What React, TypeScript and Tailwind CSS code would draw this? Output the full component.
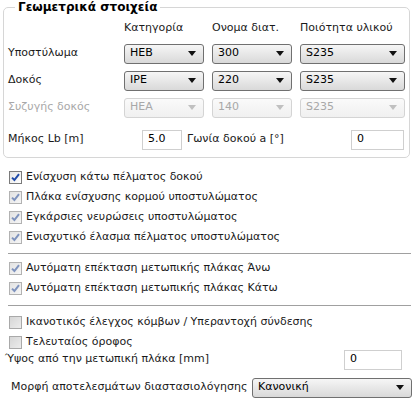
import React from "react";

const font = { fontFamily: '"DejaVu Sans", Verdana, sans-serif' };

function Select({ value, disabled, className = "" }: { value: string; disabled?: boolean; className?: string }) {
  return (
    <div
      className={`flex h-[20px] items-center justify-between rounded-[3px] border pl-[5px] pr-[7px] ${
        disabled
          ? "border-[#d4d4d4] bg-gradient-to-b from-[#fafafa] to-[#f0f0f0] text-[#a8a8a8]"
          : "border-[#707070] bg-gradient-to-b from-[#f6f6f6] to-[#d9d9d9] text-black"
      } ${className}`}
    >
      <span>{value}</span>
      <svg width="8" height="5" viewBox="0 0 8 5">
        <path d="M0 0h8L4 5z" fill={disabled ? "#c0c0c0" : "#111"} />
      </svg>
    </div>
  );
}

function TextBox({ value, className = "" }: { value: string; className?: string }) {
  return (
    <div className={`flex h-[20px] items-center border border-[#cfcfcf] bg-white pl-[5px] text-black ${className}`}>
      {value}
    </div>
  );
}

function Check({ state }: { state: "on" | "on-dis" | "off-dis" }) {
  if (state === "off-dis") {
    return <span className="h-[13px] w-[13px] shrink-0 border border-[#a9a9a9] bg-gradient-to-br from-[#d6d6d6] to-[#ececec]" />;
  }
  const on = state === "on";
  return (
    <span
      className={`flex h-[13px] w-[13px] shrink-0 items-center justify-center border ${
        on ? "border-[#7a7a7a] bg-gradient-to-br from-[#e4e4e4] to-white" : "border-[#b2b2b2] bg-gradient-to-br from-[#e2e2e2] to-[#f6f6f6]"
      }`}
    >
      <svg width="9" height="9" viewBox="0 0 9 9">
        <path d="M1 4.6L3.4 7L8 1.2" fill="none" stroke={on ? "#1f4aa8" : "#7f93bd"} strokeWidth="2" />
      </svg>
    </span>
  );
}

function CheckRow({ label, state }: { label: string; state: "on" | "on-dis" | "off-dis" }) {
  return (
    <div className="flex h-[20px] items-center gap-[4px] pl-[9px]">
      <Check state={state} />
      <span>{label}</span>
    </div>
  );
}

export default function App() {
  return (
    <div className="h-[401px] w-[417px] bg-white text-[11px] text-[#1a1a1a]" style={font}>
      <fieldset className="mx-[3px] w-[405px] rounded-[5px] border border-[#d6d6d6] px-[4px] pb-[7px] pt-[6px]">
        <legend className="ml-[7px] px-[3px] text-[12px] font-bold leading-[14px] text-black">Γεωμετρικά στοιχεία</legend>
        <div className="grid grid-cols-[108px_80px_80px_105px] items-center gap-x-2 gap-y-[7px]">
          <span />
          <span>Κατηγορία</span>
          <span>Ονομα διατ.</span>
          <span>Ποιότητα υλικού</span>

          <span>Υποστύλωμα</span>
          <Select value="HEB" />
          <Select value="300" />
          <Select value="S235" />

          <span>Δοκός</span>
          <Select value="IPE" />
          <Select value="220" />
          <Select value="S235" />

          <span className="text-[#a8a8a8]">Συζυγής δοκός</span>
          <Select value="HEA" disabled />
          <Select value="140" disabled />
          <Select value="S235" disabled />
        </div>
        <div className="mt-[12px] flex items-center">
          <span className="w-[134px]">Μήκος Lb [m]</span>
          <TextBox value="5.0" className="w-[40px]" />
          <span className="ml-[5px]">Γωνία δοκού a [°]</span>
          <TextBox value="0" className="ml-auto mr-[1px] w-[53px]" />
        </div>
      </fieldset>

      <div className="mt-[10px]">
        <CheckRow state="on" label="Ενίσχυση κάτω πέλματος δοκού" />
        <CheckRow state="on-dis" label="Πλάκα ενίσχυσης κορμού υποστυλώματος" />
        <CheckRow state="on-dis" label="Εγκάρσιες νευρώσεις υποστυλώματος" />
        <CheckRow state="on-dis" label="Ενισχυτικό έλασμα πέλματος υποστυλώματος" />
      </div>
      <div className="ml-[8px] mr-[6px] mt-[5px] border-t border-[#a0a0a0]" />
      <div className="mt-[5px]">
        <CheckRow state="on-dis" label="Αυτόματη επέκταση μετωπικής πλάκας Άνω" />
        <CheckRow state="on-dis" label="Αυτόματη επέκταση μετωπικής πλάκας Κάτω" />
      </div>
      <div className="ml-[8px] mr-[6px] mt-[6px] border-t border-[#a0a0a0]" />
      <div className="mt-[7px]">
        <CheckRow state="off-dis" label="Ικανοτικός έλεγχος κόμβων / Υπεραντοχή σύνδεσης" />
        <CheckRow state="off-dis" label="Τελευταίος όροφος" />
      </div>
      <div className="-mt-[3px] flex items-center pl-[5px] pr-[15px]">
        <span>Ύψος από την μετωπική πλάκα [mm]</span>
        <TextBox value="0" className="ml-auto w-[58px]" />
      </div>
      <div className="mt-[8px] flex items-center pl-[11px]">
        <span>Μορφή αποτελεσμάτων διαστασιολόγησης</span>
        <Select value="Κανονική" className="ml-auto mr-[5px] w-[160px]" />
      </div>
    </div>
  );
}
